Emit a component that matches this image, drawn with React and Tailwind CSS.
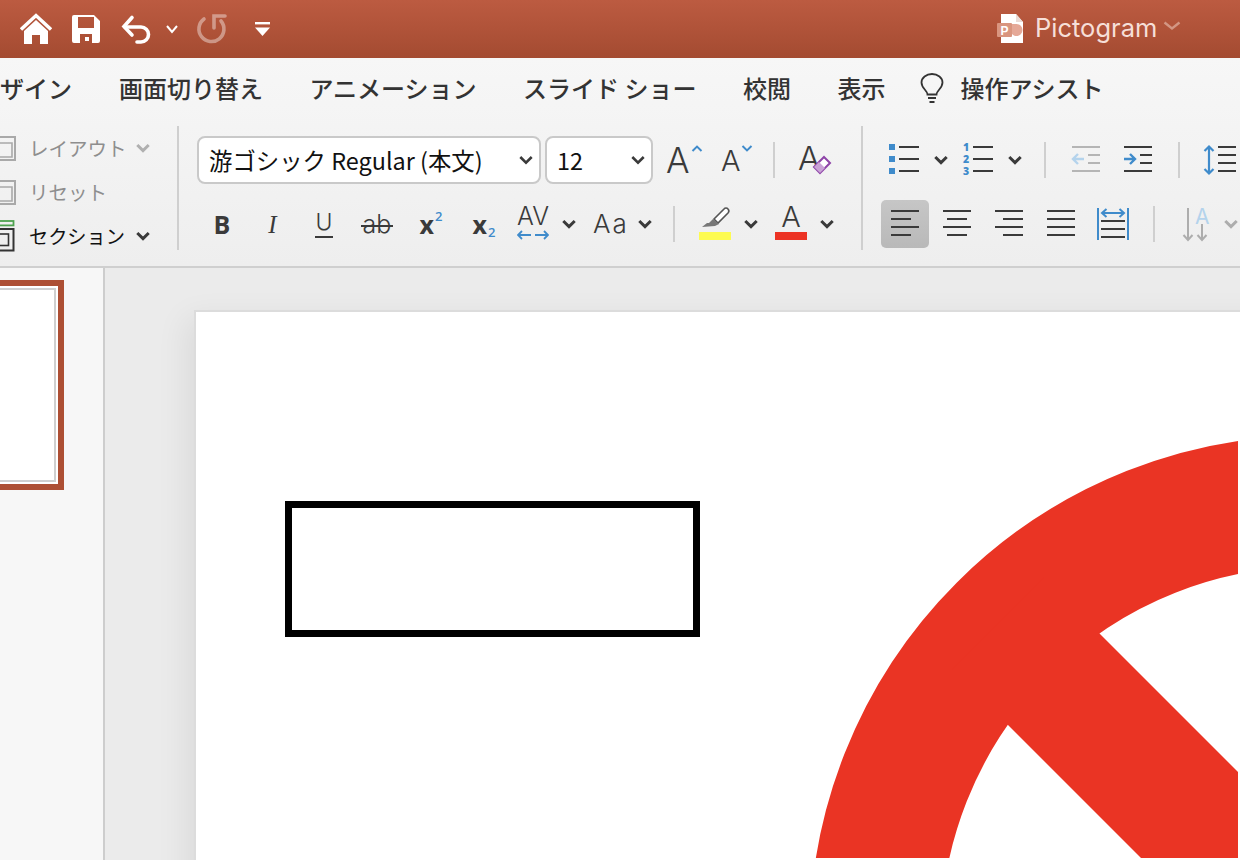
const ink = "#3a3a3a";
const blue = "#3f8bcb";

function Chev({ w = 26, color = ink, sw = 3, className = "" }) {
  return (
    <div className={`flex h-full items-center justify-center ${className}`} style={{ width: w }}>
      <svg className="shrink-0" width="14" height="10" viewBox="0 0 14 10" fill="none">
        <path d="M1.3 2 L7 7.6 L12.7 2" stroke={color} strokeWidth={sw} />
      </svg>
    </div>
  );
}

function Sep({ className = "" }) {
  return <div className={`h-9 w-[2px] shrink-0 bg-[#cfcfcf] ${className}`} />;
}

function PageIcon({ x, y, w, h, children, className = "" }) {
  return (
    <svg className={`shrink-0 ${className}`} width={w} height={h} viewBox={`${x} ${y} ${w} ${h}`} fill="none">
      {children}
    </svg>
  );
}

function Lines({ rows, color = ink, sw = 2 }) {
  return rows.map(([x1, x2, y], i) => <path key={i} d={`M${x1} ${y}H${x2}`} stroke={color} strokeWidth={sw} />);
}

function Cell({ w, children, className = "" }) {
  return (
    <div className={`flex h-12 shrink-0 items-center justify-center ${className}`} style={{ width: w }}>
      {children}
    </div>
  );
}

function Select({ w, text, className = "" }) {
  return (
    <div
      className={`flex h-12 shrink-0 items-center justify-between rounded-lg border-2 border-[#c9c9c9] bg-white pl-[10px] pr-[2px] text-[23.4px] text-[#111] ${className}`}
      style={{ width: w }}
    >
      <span className="mt-[1px] whitespace-nowrap">{text}</span>
      <Chev w={22} sw={2.6} />
    </div>
  );
}

function QuickBar() {
  return (
    <div className="flex h-[58px] shrink-0 items-center bg-gradient-to-b from-[#bc5b41] to-[#a44b31] pl-[20px]">
      <PageIcon x={20} y={8} w={32} h={34}>
        <path d="M21 25.5 L36 11.5 L51 25.5" stroke="#fff" strokeWidth="3.4" />
        <path fillRule="evenodd" d="M36 16 L48 27 V40 H40 V31 H32 V40 H24 V27Z" fill="#fff" />
      </PageIcon>
      <PageIcon x={70} y={10} w={32} h={32} className="ml-[18px]">
        <path
          fillRule="evenodd"
          d="M74 12 H94 L100 18 V38 a2 2 0 0 1 -2 2 H74 a2 2 0 0 1 -2 -2 V14 a2 2 0 0 1 2 -2Z M78 14 V25 H94 V14Z M80 31 V40 H92 V31Z"
          fill="#fff"
        />
        <rect x="85" y="34" width="4" height="4" fill="#fff" />
      </PageIcon>
      <PageIcon x={120} y={10} w={34} h={32} className="ml-[18px]">
        <path d="M132 14.5 L124 23.5 L132 32" stroke="#fff" strokeWidth="3.6" strokeLinecap="round" />
        <path d="M125 24 H141 a7.5 7.5 0 0 1 0 15 H137" stroke="#fff" strokeWidth="3.6" strokeLinecap="round" />
      </PageIcon>
      <PageIcon x={165} y={20} w={14} h={12} className="ml-[11px]">
        <path d="M167 23 L172 29 L177 23" stroke="#fff" strokeWidth="2" />
      </PageIcon>
      <PageIcon x={194} y={10} w={34} h={34} className="ml-[15px] opacity-40">
        <path d="M204 17 A12.5 12.5 0 1 0 221 19" stroke="#fff" strokeWidth="3.6" strokeLinecap="round" />
        <path d="M225 14 H214 V26" stroke="#fff" strokeWidth="3.6" strokeLinecap="round" />
      </PageIcon>
      <PageIcon x={252} y={18} w={22} h={20} className="ml-[24px]">
        <rect x="255" y="21" width="15" height="2.4" fill="#fff" />
        <path d="M255 26.5 H270 L262.5 35Z" fill="#fff" />
      </PageIcon>
      <PageIcon x={996} y={10} w={30} h={32} className="ml-[722px]">
        <path d="M1001 11 H1016 L1023 19 V40 H1001Z" fill="#fff" />
        <path d="M1016 11 L1023 19 H1016Z" fill="#eadbd6" />
        <path d="M1016 21 a6 6 0 1 1 -4 10 V21Z" fill="#e5a897" />
        <rect x="997" y="20" width="15" height="14" rx="1" fill="#d9957f" />
        <text x="1000.5" y="31.5" fontSize="12" fontWeight="700" fill="#fff" fontFamily="Liberation Sans">P</text>
      </PageIcon>
      <span className="-mt-[3px] ml-[9px] whitespace-nowrap font-['Inter',sans-serif] text-[25.5px] leading-none text-[#f6dfd8]">
        Pictogram
      </span>
      <div className="-mt-[6px] ml-[6px]">
        <svg width="18" height="10" viewBox="0 0 18 10" fill="none">
          <path d="M1.5 1.5 L9 7.5 L16.5 1.5" stroke="#d39683" strokeWidth="2.4" />
        </svg>
      </div>
    </div>
  );
}

function Tabs() {
  return (
    <div className="flex h-[60px] shrink-0 items-center text-[24px] font-medium text-[#333]">
      <span className="-ml-[24px] w-[143px] shrink-0 whitespace-nowrap">デザイン</span>
      <div className="flex shrink-0 items-center gap-[46.5px]">
        <span className="whitespace-nowrap">画面切り替え</span>
        <span className="whitespace-nowrap">アニメーション</span>
        <span className="whitespace-nowrap">スライド ショー</span>
        <span className="whitespace-nowrap">校閲</span>
        <span className="whitespace-nowrap">表示</span>
      </div>
      <svg className="ml-[34px] shrink-0" width="26" height="32" viewBox="0 0 26 32" fill="none">
        <path
          d="M8.5 21.5 C8.5 17.5 2.5 15.5 2.5 9.5 A10.5 8.5 0 0 1 23.5 9.5 C23.5 15.5 17.5 17.5 17.5 21.5Z"
          stroke="#333"
          strokeWidth="1.8"
          transform="translate(0 1)"
        />
        <path d="M9 26H17M10.5 30H15.5" stroke="#333" strokeWidth="2" />
      </svg>
      <span className="ml-[15px] whitespace-nowrap">操作アシスト</span>
    </div>
  );
}

function SlidesGroup() {
  const gray = "#a9a9a9";
  return (
    <div className="flex w-[177px] shrink-0 flex-col pt-[8px] text-[19.5px]">
      <div className="flex h-[44px] items-center">
        <PageIcon x={0} y={132} w={18} h={28}>
          <rect x="-6" y="135" width="21" height="23" stroke={gray} strokeWidth="2" />
          <path d="M-3 141H12V155H-3" stroke={gray} strokeWidth="1.6" />
        </PageIcon>
        <span className="ml-[11px] w-[107px] whitespace-nowrap text-[#8e8e8e]">レイアウト</span>
        <Chev w={14} color="#b0b0b0" />
      </div>
      <div className="flex h-[44px] items-center">
        <PageIcon x={0} y={176} w={18} h={28}>
          <rect x="-6" y="179" width="21" height="23" stroke={gray} strokeWidth="2" />
          <path d="M-3 185H12V199H-3" stroke={gray} strokeWidth="1.6" />
        </PageIcon>
        <span className="ml-[11px] whitespace-nowrap text-[#8e8e8e]">リセット</span>
      </div>
      <div className="flex h-[44px] items-center">
        <PageIcon x={0} y={218} w={18} h={36}>
          <rect x="-6" y="221" width="19.5" height="4.4" stroke="#4ea24f" strokeWidth="1.8" />
          <rect x="-6" y="229" width="19.5" height="21.5" stroke="#333" strokeWidth="2" />
          <rect x="-6" y="234" width="14.5" height="11.5" stroke="#333" strokeWidth="1.6" />
        </PageIcon>
        <span className="ml-[11px] w-[107px] whitespace-nowrap text-[19.2px] text-[#111]">セクション</span>
        <Chev w={14} />
      </div>
    </div>
  );
}

function FontGroup() {
  const t = "font-['Inter',sans-serif] text-[#3a3a3a] leading-none";
  const bold = "font-['Open_Sans',sans-serif] text-[#3a3a3a] leading-none text-[25px] font-bold";
  return (
    <div className="ml-[18px] flex w-[664px] shrink-0 flex-col gap-[16px] pt-[18px]">
      <div className="flex items-center">
        <Select w={344} text="游ゴシック Regular (本文)" />
        <Select w={108} text="12" className="ml-[4px]" />
        <Cell w={56} className="ml-[6px] justify-start pl-[7px]">
          <span className={`${t} text-[35px] font-light`}>A</span>
          <svg className="-mt-[22px] ml-[1px]" width="12" height="8" viewBox="0 0 12 8" fill="none">
            <path d="M1.5 6 L6 1.6 L10.5 6" stroke={blue} strokeWidth="2" />
          </svg>
        </Cell>
        <Cell w={54} className="justify-start pl-[6px]">
          <span className={`${t} text-[29px] font-light`}>A</span>
          <svg className="-mt-[24px]" width="12" height="8" viewBox="0 0 12 8" fill="none">
            <path d="M1.5 2 L6 6.4 L10.5 2" stroke={blue} strokeWidth="2" />
          </svg>
        </Cell>
        <Sep className="ml-[4px]" />
        <Cell w={40} className="relative ml-[17px]">
          <span className={`${t} -ml-[6px] -mt-[4px] text-[33px] font-light`}>A</span>
          <svg className="absolute right-[0px] top-[19px]" width="20" height="20" viewBox="0 0 20 20" fill="none">
            <path d="M12 2 L18 8 L8 18 L2 12Z" fill="#fff" stroke="#8e44a8" strokeWidth="2" />
            <path d="M7 7 L13 13 L8 18 L2 12Z" fill="#c9a3d6" />
          </svg>
        </Cell>
      </div>
      <div className="flex items-center">
        <Cell w={50}><span className={bold}>B</span></Cell>
        <Cell w={51}><span className="font-['Liberation_Serif',serif] text-[25px] italic leading-none text-[#3a3a3a]">I</span></Cell>
        <Cell w={52}>
          <span className={`${t} border-b-2 border-[#3a3a3a] px-[1px] pb-[2px] text-[23px] font-light`}>U</span>
        </Cell>
        <Cell w={54} className="relative">
          <span className={`${t} text-[25px] font-light`}>ab</span>
          <div className="absolute left-[11px] top-[25px] h-[2px] w-[32px] bg-[#3a3a3a]" />
        </Cell>
        <Cell w={54}>
          <span className={bold}>x</span>
          <span className="-mt-[15px] ml-[1px] font-['Open_Sans',sans-serif] text-[13px] font-semibold leading-none text-[#3f8bcb]">2</span>
        </Cell>
        <Cell w={52}>
          <span className={bold}>x</span>
          <span className="mt-[17px] ml-[1px] font-['Open_Sans',sans-serif] text-[13px] font-semibold leading-none text-[#3f8bcb]">2</span>
        </Cell>
        <Cell w={46} className="flex-col">
          <span className={`${t} -mt-[3px] whitespace-nowrap text-[25px] font-light`}>AV</span>
          <svg width="32" height="12" viewBox="0 0 32 12" fill="none">
            <path d="M1 6H14M5 2 L1 6 L5 10 M18 6H31M27 2 L31 6 L27 10" stroke={blue} strokeWidth="1.8" />
          </svg>
        </Cell>
        <Chev w={26} />
        <Cell w={58}><span className={`${t} whitespace-nowrap tracking-[2px] text-[26px] font-light`}>Aa</span></Cell>
        <Chev w={10} />
        <Sep className="ml-[23px]" />
        <Cell w={32} className="ml-[24px] flex-col justify-end pb-[8px]">
          <svg width="32" height="26" viewBox="0 0 32 26" fill="none">
            <path d="M16 13 L26 3 a2.5 2.5 0 0 1 4 0 a3 3 0 0 1 0 4 L20 17Z" fill="#fff" stroke="#555" strokeWidth="1.6" transform="translate(-1 0)" />
            <path d="M14 13 L20 18 L16 20 L3 21 L8 17 L10 17Z" fill="#777" />
          </svg>
          <div className="h-2 w-8 shrink-0 bg-[#fdfb52]" />
        </Cell>
        <Chev w={40} />
        <Cell w={32} className="ml-[4px] flex-col justify-end pb-[8px]">
          <span className={`${t} mb-[1px] text-[29px] font-light`}>A</span>
          <div className="h-2 w-8 shrink-0 bg-[#ec3324]" />
        </Cell>
        <Chev w={40} />
      </div>
    </div>
  );
}

function ParagraphGroup() {
  return (
    <div className="ml-[18px] flex flex-col gap-[16px] pt-[18px]">
      <div className="flex items-center">
        <PageIcon x={887} y={136} w={34} h={48} className="ml-[6px]">
          <rect x="889" y="144" width="6" height="6" fill={blue} />
          <rect x="889" y="156" width="6" height="6" fill={blue} />
          <rect x="889" y="168" width="6" height="6" fill={blue} />
          <Lines rows={[[899, 919, 147], [899, 919, 159], [899, 919, 171]]} />
        </PageIcon>
        <Chev w={40} />
        <div className="relative h-12 w-[34px] shrink-0 pt-[5px] text-center font-['Open_Sans',sans-serif] text-[10.5px] font-extrabold leading-[12px] text-[#3f8bcb]">
          <div className="flex flex-col items-start pl-[2px]">
            <span>1</span>
            <span>2</span>
            <span>3</span>
          </div>
          <PageIcon x={963} y={136} w={34} h={48} className="absolute left-0 top-0">
            <Lines rows={[[975, 995, 147], [975, 995, 159], [975, 995, 171]]} />
          </PageIcon>
        </div>
        <Chev w={40} />
        <Sep className="ml-[9px]" />
        <PageIcon x={1071} y={136} w={32} h={48} className="ml-[24px]">
          <Lines color="#b5b5b5" rows={[[1073, 1101, 147], [1089, 1101, 155], [1089, 1101, 163], [1073, 1101, 171]]} />
          <path d="M1085 159H1074M1079 154 L1074 159 L1079 164" stroke="#b4d3ec" strokeWidth="2.4" />
        </PageIcon>
        <PageIcon x={1123} y={136} w={32} h={48} className="ml-[20px]">
          <Lines rows={[[1125, 1153, 147], [1141, 1153, 155], [1141, 1153, 163], [1125, 1153, 171]]} />
          <path d="M1125 159H1136M1131 154 L1136 159 L1131 164" stroke={blue} strokeWidth="2.4" />
        </PageIcon>
        <Sep className="ml-[24px]" />
        <PageIcon x={1203} y={136} w={37} h={48} className="ml-[22px]">
          <path d="M1210 147V173M1205.5 151 L1210 146.5 L1214.5 151 M1205.5 169 L1210 173.5 L1214.5 169" stroke={blue} strokeWidth="2.2" />
          <Lines rows={[[1219, 1237, 147], [1219, 1237, 155], [1219, 1237, 163], [1219, 1237, 171]]} />
        </PageIcon>
      </div>
      <div className="flex items-center">
        <div className="flex h-12 w-12 shrink-0 items-center justify-center rounded-[5px] bg-gradient-to-b from-[#c6c6c6] to-[#b9b9b9]">
          <PageIcon x={889} y={208} w={32} h={32}>
            <Lines rows={[[891, 919, 211], [891, 911, 219], [891, 919, 227], [891, 911, 235]]} />
          </PageIcon>
        </div>
        <PageIcon x={941} y={208} w={32} h={32} className="ml-[12px]">
          <Lines rows={[[943, 971, 211], [947, 967, 219], [943, 971, 227], [947, 967, 235]]} />
        </PageIcon>
        <PageIcon x={993} y={208} w={32} h={32} className="ml-[20px]">
          <Lines rows={[[995, 1023, 211], [1003, 1023, 219], [995, 1023, 227], [1003, 1023, 235]]} />
        </PageIcon>
        <PageIcon x={1045} y={208} w={32} h={32} className="ml-[20px]">
          <Lines rows={[[1047, 1075, 211], [1047, 1075, 219], [1047, 1075, 227], [1047, 1075, 235]]} />
        </PageIcon>
        <PageIcon x={1096} y={206} w={34} h={36} className="ml-[19px]">
          <path d="M1098 208V240M1128 208V240" stroke={blue} strokeWidth="2" />
          <path d="M1102 213H1124M1106.5 209 L1102 213 L1106.5 217 M1119.5 209 L1124 213 L1119.5 217" stroke={blue} strokeWidth="2" />
          <Lines rows={[[1101, 1125, 221], [1101, 1125, 229], [1101, 1125, 237]]} />
        </PageIcon>
        <Sep className="ml-[23px]" />
        <PageIcon x={1182} y={206} w={30} h={36} className="ml-[27px] overflow-visible">
          <path d="M1188 208V240M1183.5 235 L1188 240 L1192.5 235 M1202 224V240M1197.5 235 L1202 240 L1206.5 235" stroke="#adadad" strokeWidth="2" />
          <text x="1195" y="224" fontSize="21" fill="#b4d3ec" fontFamily="Inter">A</text>
        </PageIcon>
        <Chev w={30} color="#adadad" className="ml-[4px]" />
      </div>
    </div>
  );
}

function Ribbon() {
  return (
    <div className="flex h-[148px] shrink-0 overflow-hidden">
      <SlidesGroup />
      <div className="mt-[8px] h-[124px] w-[2px] shrink-0 bg-[#cfcfcf]" />
      <FontGroup />
      <div className="mt-[8px] h-[124px] w-[2px] shrink-0 bg-[#cfcfcf]" />
      <ParagraphGroup />
    </div>
  );
}

function ThumbPanel() {
  return (
    <div className="w-[105px] shrink-0 border-r-2 border-[#cdcdcd] bg-[#f7f7f7] pt-[12px]">
      <div className="-ml-[20px] h-[210px] w-[84px] border-[6px] border-[#ad4f34] bg-white p-[2px]">
        <div className="h-full w-full border-2 border-[#cfcfcf] bg-white" />
      </div>
    </div>
  );
}

function Slide() {
  return (
    <div className="flex-1 overflow-hidden bg-[#ebebeb] pl-[89px] pt-[42px]">
      <div className="relative h-[700px] w-[1200px] border-2 border-[#dcdcdc] bg-white shadow-[-8px_8px_30px_rgba(0,0,0,0.07)]">
        <div className="absolute left-[89px] top-[189px] h-[136px] w-[415px] border-[7px] border-black" />
        <svg className="absolute left-[602px] top-[116px]" width="440" height="430" viewBox="800 430 440 430" fill="none">
          <circle cx="1314" cy="940" r="436.9" stroke="#ea3424" strokeWidth="131.2" />
          <path d="M1000 625.5 L1400 1025.5" stroke="#ea3424" strokeWidth="129.4" />
        </svg>
      </div>
    </div>
  );
}

export default function App() {
  return (
    <div className="flex h-[860px] w-[1240px] flex-col overflow-hidden bg-white font-['Noto_Sans_CJK_JP',sans-serif]">
      <QuickBar />
      <div className="shrink-0 border-b-2 border-[#cfcfcf] bg-gradient-to-b from-[#f7f7f7] to-[#eeeeee]">
        <Tabs />
        <Ribbon />
      </div>
      <div className="flex min-h-0 flex-1">
        <ThumbPanel />
        <Slide />
      </div>
    </div>
  );
}
